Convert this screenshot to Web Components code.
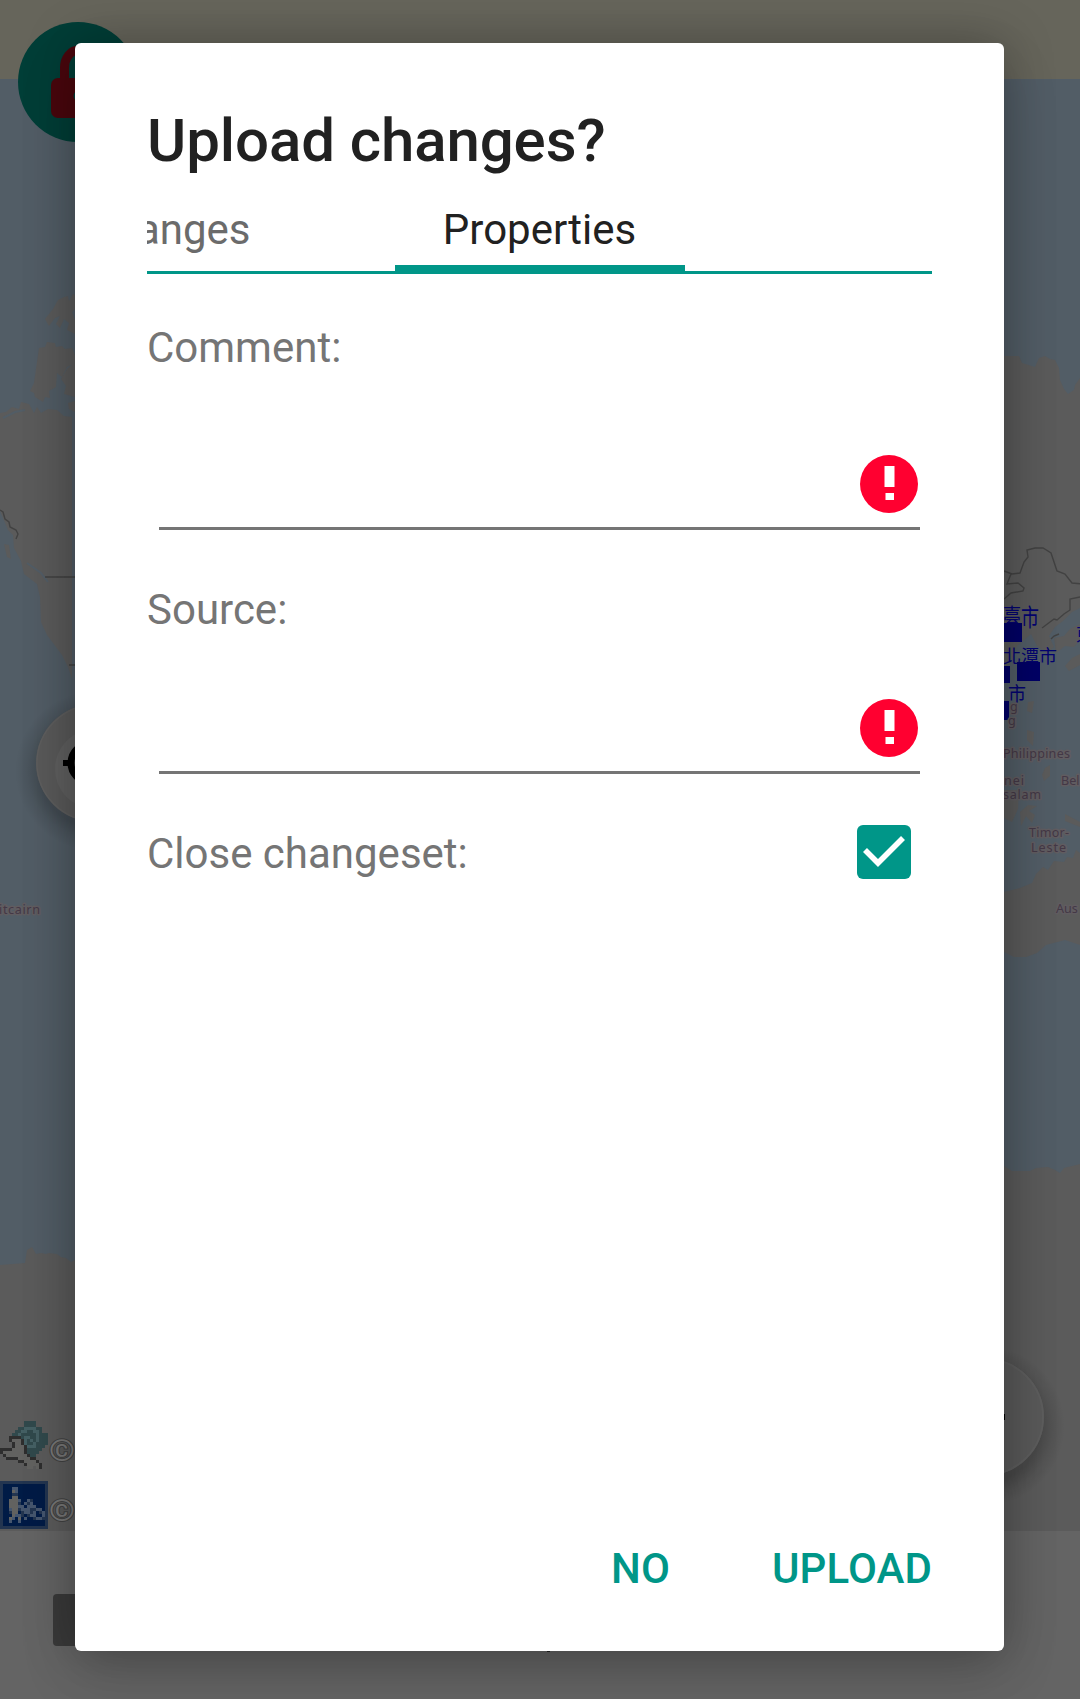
<!DOCTYPE html>
<html lang="en">
<head>
<meta charset="utf-8">
<title>Upload changes</title>
<style>
html,body{margin:0;height:100%;overflow:hidden;background:#5b5b5b}
body{font-family:Roboto,"Liberation Sans",sans-serif}
</style>
</head>
<body>
<upload-screen></upload-screen>
<script>
const define = (name, html) => customElements.define(name, class extends HTMLElement {
  constructor() {
    super();
    this.attachShadow({mode: 'open'}).innerHTML = html;
  }
});

const bitmaps = {
  wrench: {x: 0, y: 1421, rows: [
    '........TTTT....','........TTTT....','......TTttttTT..','.....TTttTTttT..',
    '....TTtTTTTTtTTT','...kkkkTttTTtTTT','...kwwwktTtTtTTT','....kwwktTTtTTTT',
    '....kwwwktttTTT.','kkkkwwwwkTTTTT..','kwwwwwwwkTTTT...','.kwwwwwwwkTT....',
    '..kkkkwwwwkk....','......kkwwwwk...','........kwwwwk..','.........ww.wk..']},
  bike: {x: 0, y: 1481, rows: [
    'BBBBBBBBBBBBBBBB','BbbbbbbbbbbbbbbB','BbbbggbbbbbbbbbB','BbbbwgbbbbbbbbbB',
    'BbbbBBbbbbbbbbbB','BbbbwwbbbbbbbbbB','BbbwwwgbbgBbbbbB','BbbwwwBbgBgbbbbB',
    'BbbwwwggbgggbbbB','BbbgwwBgggBBggbB','BbbBwwbBggBgbBgB','BbbbwggBbBggbbgB',
    'BbbwgbwbgbbBggBB','BbbgbbgbbbbbbbbB','BbbbbbbbbbbbbbbB','BBBBBBBBBBBBBBBB']}
};
const palette = {T:'#31494c',t:'#456064',k:'#2e2e2e',w:'#626260',B:'#233550',b:'#001b46',g:'#46566e'};
const pixels = ({x, y, rows}) => rows.map((r, j) => [...r].map((c, i) => c === '.' ? '' :
  `<rect x="${x+i*3}" y="${y+j*3}" width="3" height="3" fill="${palette[c]}"/>`).join('')).join('');

define('world-map', `
<style>
:host{display:block;width:1080px;height:1699px}
svg{display:block}
.place{font:12.6px "Noto Sans","DejaVu Sans",sans-serif;fill:#443846;stroke:#605c60;stroke-width:3px;paint-order:stroke;stroke-linejoin:round}
.city{font:18px "Noto Sans CJK TC",sans-serif;fill:#040470}
.copy{font:30px Roboto,sans-serif;fill:#777;stroke:#414141;stroke-width:2px;paint-order:stroke}
</style>
<svg width="1080" height="1699" viewBox="0 0 1080 1699">
<defs>
<radialGradient id="shade"><stop offset=".7" stop-color="#000" stop-opacity=".2"/><stop offset=".85" stop-color="#000" stop-opacity=".08"/><stop offset="1" stop-color="#000" stop-opacity="0"/></radialGradient>
</defs>
<rect width="1080" height="1699" fill="#525d66"/>
<rect width="1080" height="79" fill="#66655b"/>
<g fill="#5b5b5b">
<path d="M45 319l8-10 5-9 6-3 4-1 1 5 4-7 2 1V309l-3 3 3 8v14l-8-4 2-7-5-4-4 9-4-4 4-8-5 2-6 8zM39 348l6-1 2-5 8 1 1 4 6-1 3 3 7-1 3 7v8l-8 4-5 10-5-4-1 14-7 4 1 7-5-1-2 5-8-5-1-4-4-2 4-8zM75 362V397l-11-3 2-8-5-7 6-10zM68 403l7-2v11l-6-3z"/>
<path d="M0 413l6-1 6-5 7 2 2-7 8 2 5 9 3-6 4 6 7-4 9 1 7 6 8 1V679L68 667 62 655 47 635 41 622 40 597 37 584 24 574 21 561 14 548 13 535 8 530 0 511z"/>
<path d="M4 544l5 1 2 14-4-2zM0 1265l25-2 2-13 5-3 4 7 5-1 5 1 3-1 8 1 4 3 5 1 5 4 4-2V1531H0z"/>
<path d="M1004 356h15l3 7 13 4 4-9 6-2 5 3 5 1 4 8 1 12 4 9 4 5 6-4 1-5 5-7V608l-8 4-9 9-8 6-6 9 5 11-7 6-10-7-6-12-14 12-7 18-13 8z"/>
<path d="M1054 638l10-2 6-7 10-5v16l-6 7-9-1-9 7zM1072 658l8-4v11l-11 6-4-5zM1028 702l6-1-2 12-5-2zM1027 730l7 2-1 14-6-6zM1045 768l5-3v11l-6 5-2-6zM1004 790h15l-1 19-6 13-8-4zM1020 812l8-7 9 1-8 5 6 4-3 8-6-7-5 10zM1037 835l16-1-2 3-15 1zM1065 814l15 8v5l-15-6z"/>
<path d="M1004 892l16-4 12-5 4-9 7-7 5 3 6-9 10 1 3-5 6 1 3-8 4 3v92l-15-5-19 5-9 8-11 4h-12l-10-5zM1004 1166l8 5h18l6-3 12-1 7 3 5 3 4-5 16-4V1531h-76z"/>
</g>
<g fill="none" stroke="#525d66" stroke-width="2"><path d="M3 418l12-6 10-2M27 563l14 10 7 9"/></g>
<g fill="none" stroke="#424242" stroke-width="1.4">
<path d="M0 510l3 2 2 7 4 3 1 5 6 3 2 4-2 5M45 577h30M69 665h6"/>
<path d="M1004 571l8 3 8-1 4-11 4-5-1-7 8-2h8l8 5 4 12 2 6 8 3 7 9 10 1M1011 574l-4 10 11-1 6 5-1 3-12 2-7 6M1042 628l12-9 3 1 7-6 6-4v-11l10-2M1051 639l3-3 5-2"/>
</g>
<g class="city">
<text transform="translate(1003 626) scale(1 1.35)">臺市</text><text transform="translate(1003 663)">北潭市</text><text transform="translate(1008 701) scale(1 1.1)">市</text><text x="1076" y="641">東</text>
<g fill="#020266"><rect x="1004" y="623" width="18" height="19"/><rect x="1017" y="662" width="23" height="19"/><rect x="1004" y="666" width="6" height="17"/><rect x="1004" y="701" width="5" height="19"/></g>
</g>
<g class="place">
<text x="1010" y="711">g</text><text x="1008" y="725">g</text>
<text x="1003" y="758" textLength="67">Philippines</text>
<text x="1004" y="785" textLength="20">nei</text><text x="1003" y="799" textLength="38">salam</text>
<text x="1061" y="785">Bel</text><text x="1029" y="837" textLength="40">Timor-</text><text x="1031" y="852" textLength="35">Leste</text>
<text x="1056" y="913">Aus</text><text x="-1" y="914" textLength="41">itcairn</text>
</g>
<ellipse cx="95" cy="771" rx="80" ry="80" fill="url(#shade)"/>
<circle cx="95" cy="763" r="59" fill="#5a5a5a"/><circle cx="95" cy="763" r="58" fill="none" stroke="#5f5f5f" stroke-width="1.4"/>
<circle cx="95" cy="769" r="40" fill="#606060"/>
<circle cx="90" cy="763" r="19" fill="none" stroke="#000" stroke-width="7"/><path d="M63 763h11" stroke="#000" stroke-width="6"/>
<ellipse cx="985" cy="1426" rx="80" ry="80" fill="url(#shade)"/>
<circle cx="985" cy="1417" r="59" fill="#5a5a5a"/><circle cx="985" cy="1417" r="58" fill="none" stroke="#5e5e5e" stroke-width="2"/>
<rect x="995" y="1414" width="10" height="6"/>
<circle cx="78" cy="82" r="60" fill="#003e37"/>
<path d="M64.500 88V68a14 18 0 0 1 28 0v20" fill="none" stroke="#4a070d" stroke-width="9"/><rect x="51" y="78" width="54" height="40" rx="7" fill="#4a070d"/><circle cx="79" cy="96" r="5.500" fill="#003e37"/>
<text class="copy" x="49" y="1461" textLength="26" lengthAdjust="spacingAndGlyphs">©</text><text class="copy" x="49" y="1521" textLength="26" lengthAdjust="spacingAndGlyphs">©</text>
${pixels(bitmaps.wrench)}${pixels(bitmaps.bike)}
<rect y="1531" width="1080" height="168" fill="#646464"/>
<rect x="53" y="1594" width="60" height="52" rx="4" fill="#3a3a3a"/><rect x="547" y="1649" width="3" height="3" fill="#222"/>
</svg>`);

define('tab-strip', `
<style>
:host{display:flex;justify-content:center;height:75px;overflow:hidden;border-bottom:3px solid #009688;box-sizing:border-box}
.row{flex:none;display:flex;width:1084px;justify-content:center;font-size:42px;line-height:49px;color:#212121}
.prev{width:397px;display:flex;justify-content:flex-end;color:#6b6b6b;padding:6px 144px 0 0;box-sizing:border-box}
.current{width:290px;text-align:center;border-bottom:6px solid #009688;box-sizing:border-box;height:72px;padding-top:6px}
.next{width:397px}
</style>
<div class="row"><div class="prev"><slot name="previous"></slot></div><div class="current"><slot></slot></div><div class="next"></div></div>`);

define('error-mark', `
<style>:host{display:block;width:58px;height:58px}svg{display:block}</style>
<svg width="58" height="58" viewBox="0 0 58 58"><circle cx="29" cy="29" r="29" fill="#ff0030"/><path fill="#fff" d="M24.500 11h10v21h-10zM25.500 38h8.500v7h-8.500z"/></svg>`);

define('form-field', `
<style>
:host{display:flex;flex-direction:column;font-size:42px;line-height:49px;color:#757575}
.input{display:flex;justify-content:flex-end;align-items:flex-end;height:120px;margin:20px 12px 0;padding:0 2px 14px 0;border-bottom:3px solid #757575;box-sizing:border-box}
:host([first]) .input{margin-top:38px}
</style>
<div><slot></slot></div><div class="input"><error-mark></error-mark></div>`);

define('check-row', `
<style>
:host{display:flex;justify-content:space-between;align-items:center;height:54px;padding-right:21px;font-size:42px;line-height:49px;color:#757575}
span{padding-top:2px}
svg{display:block}
</style>
<span><slot></slot></span><svg width="54" height="54" viewBox="0 0 54 54"><rect width="54" height="54" rx="6" fill="#009688"/><path d="M8 25L21 38 46 13" fill="none" stroke="#fff" stroke-width="5.600"/></svg>`);

define('action-button', `
<style>:host{display:block;font-size:42px;font-weight:500;line-height:49px;letter-spacing:.1px;color:#009688}</style><slot></slot>`);

define('modal-dialog', `
<style>
:host{display:flex;flex-direction:column;box-sizing:border-box;width:929px;height:1608px;padding:63px 72px 58px;background:#fff;border-radius:6px;box-shadow:0 0 50px rgba(0,0,0,.27),0 24px 60px rgba(0,0,0,.12)}
h1{margin:0;font-size:60px;font-weight:500;line-height:70px;letter-spacing:-.1px;color:#212121}
.body{flex:1;display:flex;flex-direction:column}
.actions{display:flex;justify-content:flex-end;gap:102px}
</style>
<h1><slot name="title"></slot></h1><div class="body"><slot></slot></div><div class="actions"><slot name="actions"></slot></div>`);

define('upload-screen', `
<style>
:host{display:grid;width:1080px;height:1699px}
world-map,.overlay{grid-area:1/1}
.overlay{display:flex;padding:43px 0 0 75px;align-items:flex-start;z-index:1}
tab-strip{margin-top:23px}
.first{margin-top:49px}.second{margin-top:55px}
check-row{margin-top:51px}
</style>
<world-map></world-map>
<div class="overlay"><modal-dialog>
<span slot="title">Upload changes?</span>
<tab-strip><span slot="previous">Changes</span>Properties</tab-strip>
<form-field class="first" first>Comment:</form-field>
<form-field class="second">Source:</form-field>
<check-row>Close changeset:</check-row>
<action-button slot="actions">NO</action-button><action-button slot="actions">UPLOAD</action-button>
</modal-dialog></div>`);
</script>
</body>
</html>
